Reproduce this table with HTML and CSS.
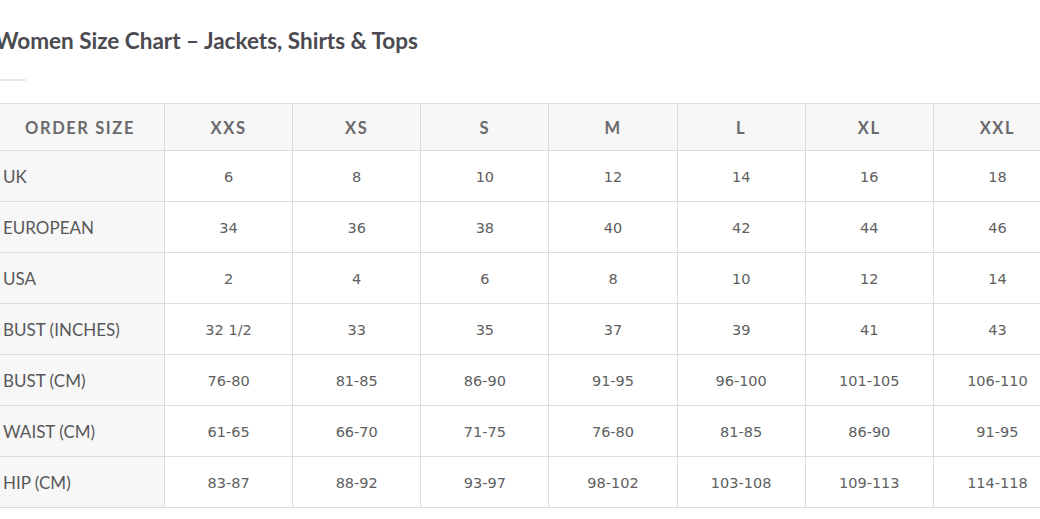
FILE: index.html
```html
<!DOCTYPE html>
<html>
<head>
<meta charset="utf-8">
<link rel="stylesheet" href="styles.css">
</head>
<body>
<div class="page">
  <h1 class="title">Women Size Chart – Jackets, Shirts &amp; Tops</h1>
  <div class="rule"></div>
  <table class="chart">
    <colgroup>
      <col class="c-label">
      <col><col><col><col><col><col><col>
    </colgroup>
    <thead>
      <tr><th>ORDER SIZE</th><th>XXS</th><th>XS</th><th>S</th><th>M</th><th>L</th><th>XL</th><th>XXL</th></tr>
    </thead>
    <tbody>
      <tr><th>UK</th><td>6</td><td>8</td><td>10</td><td>12</td><td>14</td><td>16</td><td>18</td></tr>
      <tr><th>EUROPEAN</th><td>34</td><td>36</td><td>38</td><td>40</td><td>42</td><td>44</td><td>46</td></tr>
      <tr><th>USA</th><td>2</td><td>4</td><td>6</td><td>8</td><td>10</td><td>12</td><td>14</td></tr>
      <tr><th>BUST (INCHES)</th><td>32 1/2</td><td>33</td><td>35</td><td>37</td><td>39</td><td>41</td><td>43</td></tr>
      <tr><th>BUST (CM)</th><td>76-80</td><td>81-85</td><td>86-90</td><td>91-95</td><td>96-100</td><td>101-105</td><td>106-110</td></tr>
      <tr><th>WAIST (CM)</th><td>61-65</td><td>66-70</td><td>71-75</td><td>76-80</td><td>81-85</td><td>86-90</td><td>91-95</td></tr>
      <tr><th>HIP (CM)</th><td>83-87</td><td>88-92</td><td>93-97</td><td>98-102</td><td>103-108</td><td>109-113</td><td>114-118</td></tr>
    </tbody>
  </table>
</div>
</body>
</html>
```
FILE: styles.css
```css
html, body {
  margin: 0;
  padding: 0;
  background: #ffffff;
  overflow: hidden;
}
.page {
  margin-left: -5px;
  width: 1070px;
}
.title {
  margin: 27px 0 0 0;
  font-family: "Lato", "Liberation Sans", sans-serif;
  font-weight: 700;
  font-size: 22.5px;
  line-height: 28px;
  color: #4b4a50;
}
.rule {
  width: 31px;
  height: 2px;
  background: #e6e6e6;
  margin-top: 24px;
}
.chart {
  margin-top: 22px;
  border-collapse: collapse;
  table-layout: fixed;
  width: 1067px;
}
.c-label {
  width: 169px;
}
.chart th, .chart td {
  border: 1px solid #dcdcdc;
  padding: 0 8px;
}
.chart thead th {
  height: 44px;
  padding-top: 2px;
  background: #f7f7f7;
  font-family: "Lato", "Liberation Sans", sans-serif;
  font-weight: 700;
  font-size: 16.5px;
  letter-spacing: 1.6px;
  color: #6a6a6c;
  text-align: center;
}
.chart tbody th {
  height: 49px;
  padding-top: 1px;
  background: #f7f7f7;
  font-family: "Lato", "Liberation Sans", sans-serif;
  font-weight: 400;
  font-size: 17px;
  color: #58585a;
  text-align: left;
  padding-left: 7px;
}
.chart tbody td {
  height: 49px;
  padding-top: 1px;
  font-family: "DejaVu Sans", "Liberation Sans", sans-serif;
  font-size: 14.5px;
  color: #606060;
  text-align: center;
}
```
